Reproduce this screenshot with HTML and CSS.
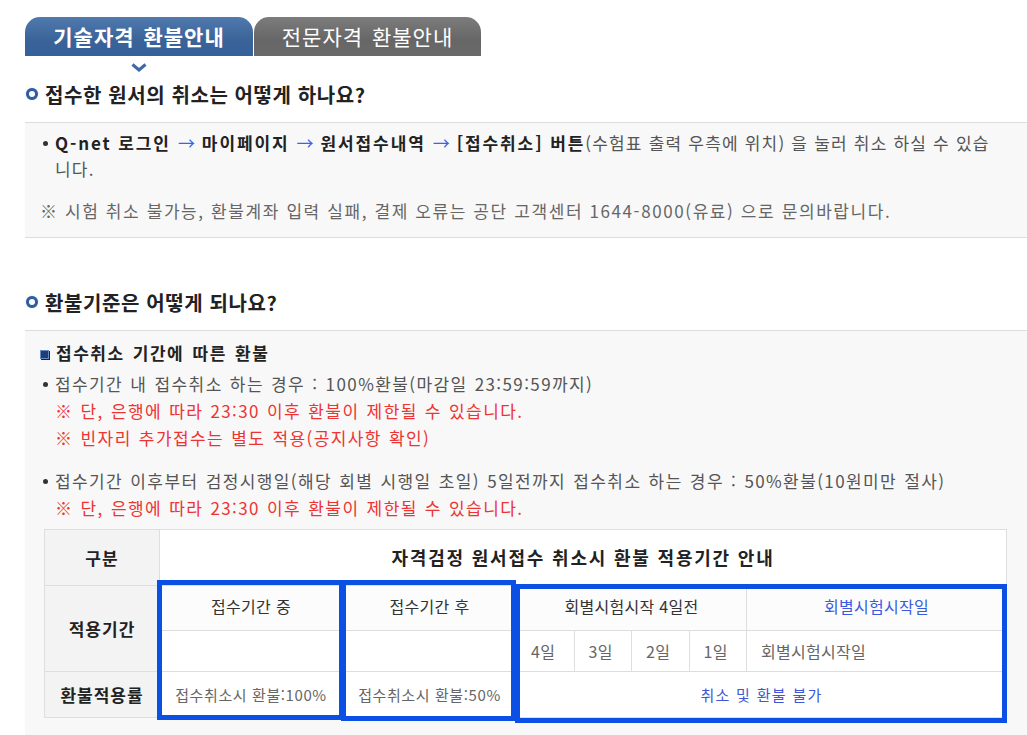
FILE: index.html
```html
<!DOCTYPE html>
<html lang="ko">
<head>
<meta charset="utf-8">
<title>환불안내</title>
<link rel="stylesheet" href="styles.css">
</head>
<body>
<div class="page">
  <div class="tabs">
    <div class="tab tab-on">기술자격 환불안내</div>
    <div class="tab tab-off">전문자격 환불안내</div>
  </div>
  <div class="chev-row">
    <svg class="chev" width="16" height="9" viewBox="0 0 16 9"><path d="M1.5 1.5 L8 7 L14.5 1.5" fill="none" stroke="#3d6aa5" stroke-width="3"/></svg>
  </div>

  <h2 class="qtitle"><span class="ring"></span>접수한 원서의 취소는 어떻게 하나요?</h2>
  <div class="box box1">
    <ul class="dots">
      <li><b>Q-net 로그인</b> <span class="arr">→</span> <b>마이페이지</b> <span class="arr">→</span> <b>원서접수내역</b> <span class="arr">→</span> <b>[접수취소] 버튼</b>(수험표 출력 우측에 위치) 을 눌러 취소 하실 수 있습니다.</li>
    </ul>
    <p class="note">※ 시험 취소 불가능, 환불계좌 입력 실패, 결제 오류는 공단 고객센터 1644-8000(유료) 으로 문의바랍니다.</p>
  </div>

  <h2 class="qtitle q2"><span class="ring"></span>환불기준은 어떻게 되나요?</h2>
  <div class="box box2">
    <h3 class="sub"><span class="sq"></span>접수취소 기간에 따른 환불</h3>
    <ul class="dots">
      <li>접수기간 내 접수취소 하는 경우 : 100%환불(마감일 23:59:59까지)
        <p class="red">※ 단, 은행에 따라 23:30 이후 환불이 제한될 수 있습니다.</p>
        <p class="red">※ 빈자리 추가접수는 별도 적용(공지사항 확인)</p>
      </li>
      <li class="gap">접수기간 이후부터 검정시행일(해당 회별 시행일 초일) 5일전까지 접수취소 하는 경우 : 50%환불(10원미만 절사)
        <p class="red">※ 단, 은행에 따라 23:30 이후 환불이 제한될 수 있습니다.</p>
      </li>
    </ul>

    <div class="tblwrap">
      <table class="tbl">
        <colgroup>
          <col class="c1"><col class="c2"><col class="c3"><col class="cd"><col class="cd"><col class="cd"><col class="cd"><col class="c8">
        </colgroup>
        <tr class="r1">
          <th>구분</th>
          <th colspan="7" class="title">자격검정 원서접수 취소시 환불 적용기간 안내</th>
        </tr>
        <tr class="r2">
          <th rowspan="2">적용기간</th>
          <td class="hd">접수기간 중</td>
          <td class="hd">접수기간 후</td>
          <td class="hd" colspan="4">회별시험시작 4일전</td>
          <td class="hd blue">회별시험시작일</td>
        </tr>
        <tr class="r3">
          <td></td>
          <td></td>
          <td class="lf">4일</td>
          <td class="lf">3일</td>
          <td class="lf">2일</td>
          <td class="lf">1일</td>
          <td class="lf">회별시험시작일</td>
        </tr>
        <tr class="r4">
          <th>환불적용률</th>
          <td>접수취소시 환불:100%</td>
          <td>접수취소시 환불:50%</td>
          <td colspan="5" class="bluetxt">취소 및 환불 불가</td>
        </tr>
      </table>
      <div class="mark mark1"></div>
      <div class="mark mark2"></div>
      <div class="mark mark3"></div>
    </div>
  </div>
</div>
</body>
</html>
```

FILE: styles.css
```css
html, body {
  margin: 0;
  padding: 0;
  background: #fff;
}
body {
  font-family: "Noto Sans CJK KR", "Noto Sans", sans-serif;
  color: #555;
  overflow: hidden;
}
.page {
  padding: 17px 0 0 25px;
}
.tabs {
  display: flex;
  gap: 1px;
  height: 39px;
}
.tab {
  width: 228px;
  height: 39px;
  border-radius: 15px 15px 0 0;
  color: #fff;
  font-size: 21px;
  line-height: 39px;
  text-align: center;
  letter-spacing: 1px;
  word-spacing: 2px;
}
.tab-on {
  background: linear-gradient(#5079ad, #3a6398 60%, #35609a);
  font-weight: bold;
}
.tab-off {
  width: 227px;
  background: linear-gradient(#7c7c7c, #666 60%, #6a6a6a);
  font-weight: normal;
}
.chev-row {
  height: 12px;
  padding: 7px 0 0 106px;
}
.chev {
  display: block;
}
.qtitle {
  margin: 3px 0 0;
  height: 32px;
  display: flex;
  align-items: center;
  gap: 7px;
  font-size: 20px;
  font-weight: bold;
  color: #222;
  letter-spacing: 0.6px;
}
.q2 {
  margin-top: 48px;
}
.ring {
  width: 6px;
  height: 6px;
  border-radius: 50%;
  border: 3px solid #2d5f9c;
  background: #fff;
  box-shadow: 0 0 1px #8aa8d0;
  margin-left: 1px;
}
.box {
  margin-top: 12px;
  border-top: 1px solid #dcdcdc;
  background: #f8f8f8;
  padding: 7px 22px 13px 15px;
}
.box1 {
  border-bottom: 1px solid #dcdcdc;
}
.dots {
  list-style: none;
  margin: 0;
  padding: 0;
}
.dots li {
  position: relative;
  padding-left: 15px;
  font-size: 17px;
  letter-spacing: 1.4px;
  word-spacing: 1px;
  line-height: 26px;
  color: #555;
}
.box1 .dots li {
  letter-spacing: 1.2px;
  word-spacing: 0;
}
.box1 .dots b {
  letter-spacing: 1.9px;
}
.dots li::before {
  content: "";
  position: absolute;
  left: 3px;
  top: 11px;
  width: 5px;
  height: 5px;
  border-radius: 50%;
  background: #333;
}
.box2 .dots li {
  line-height: 27px;
}
.box2 .dots li::before {
  top: 12px;
}
.dots b {
  color: #222;
}
.arr {
  color: #3366ee;
  font-weight: normal;
  letter-spacing: 0;
  padding: 0 1px;
}
.note {
  margin: 16px 0 0;
  font-size: 17px;
  letter-spacing: 1.6px;
  line-height: 26px;
  color: #666;
}
.box2 {
  padding: 9px 22px 30px 15px;
  min-height: 500px;
}
.sub {
  margin: 0 0 4px;
  display: flex;
  align-items: center;
  gap: 7px;
  font-size: 17px;
  letter-spacing: 1.5px;
  word-spacing: 2px;
  font-weight: bold;
  color: #222;
  line-height: 26px;
}
.sq {
  width: 7px;
  height: 7px;
  background: #1e3f73;
  border: 1px solid #6a8cc0;
  box-shadow: 1px 1px 0 #0d2a55;
  margin-top: 2px;
}
.red {
  margin: 0;
  color: #ee3333;
}
.gap {
  margin-top: 16px;
}
.tblwrap {
  position: relative;
  margin: 8px 0 0 4px;
  width: 962px;
}
.tbl {
  width: 962px;
  border-collapse: collapse;
  table-layout: fixed;
  background: #fff;
}
.c1 { width: 115px; }
.c2 { width: 183px; }
.c3 { width: 174px; }
.cd { width: 57.5px; }
.c8 { width: 260px; }
.tbl th, .tbl td {
  border: 1px solid #dedede;
  text-align: center;
  vertical-align: middle;
  padding: 0;
}
.tbl th {
  background: #f3f3f3;
  color: #222;
  font-weight: bold;
  font-size: 17px;
  letter-spacing: 1px;
}
.tbl th.title {
  background: #fff;
  font-size: 18px;
  letter-spacing: 1.8px;
  padding-bottom: 2px;
}
.r1 { height: 56px; }
.r2 { height: 45px; }
.r3 { height: 41px; }
.r4 { height: 46px; }
.tbl td {
  color: #666;
  font-size: 15px;
  letter-spacing: 0.6px;
}
.tbl td.hd {
  background: #fcfcfc;
  color: #333;
  font-size: 16px;
  letter-spacing: 0.3px;
  padding-bottom: 4px;
}
.tbl td.hd.blue {
  color: #3a5be0;
}
.tbl td.lf {
  text-align: left;
  padding-left: 14px;
  font-size: 16px;
  letter-spacing: 0.3px;
}
.tbl td.bluetxt {
  color: #4056d8;
  letter-spacing: 1.3px;
}
.mark {
  position: absolute;
  border: 5px solid #0b4fe4;
  box-sizing: border-box;
}
.mark1 { left: 113px; top: 51px; width: 187px; height: 140px; }
.mark2 { left: 297px; top: 51px; width: 175px; height: 141px; }
.mark3 { left: 471px; top: 55px; width: 492px; height: 139px; }
```
